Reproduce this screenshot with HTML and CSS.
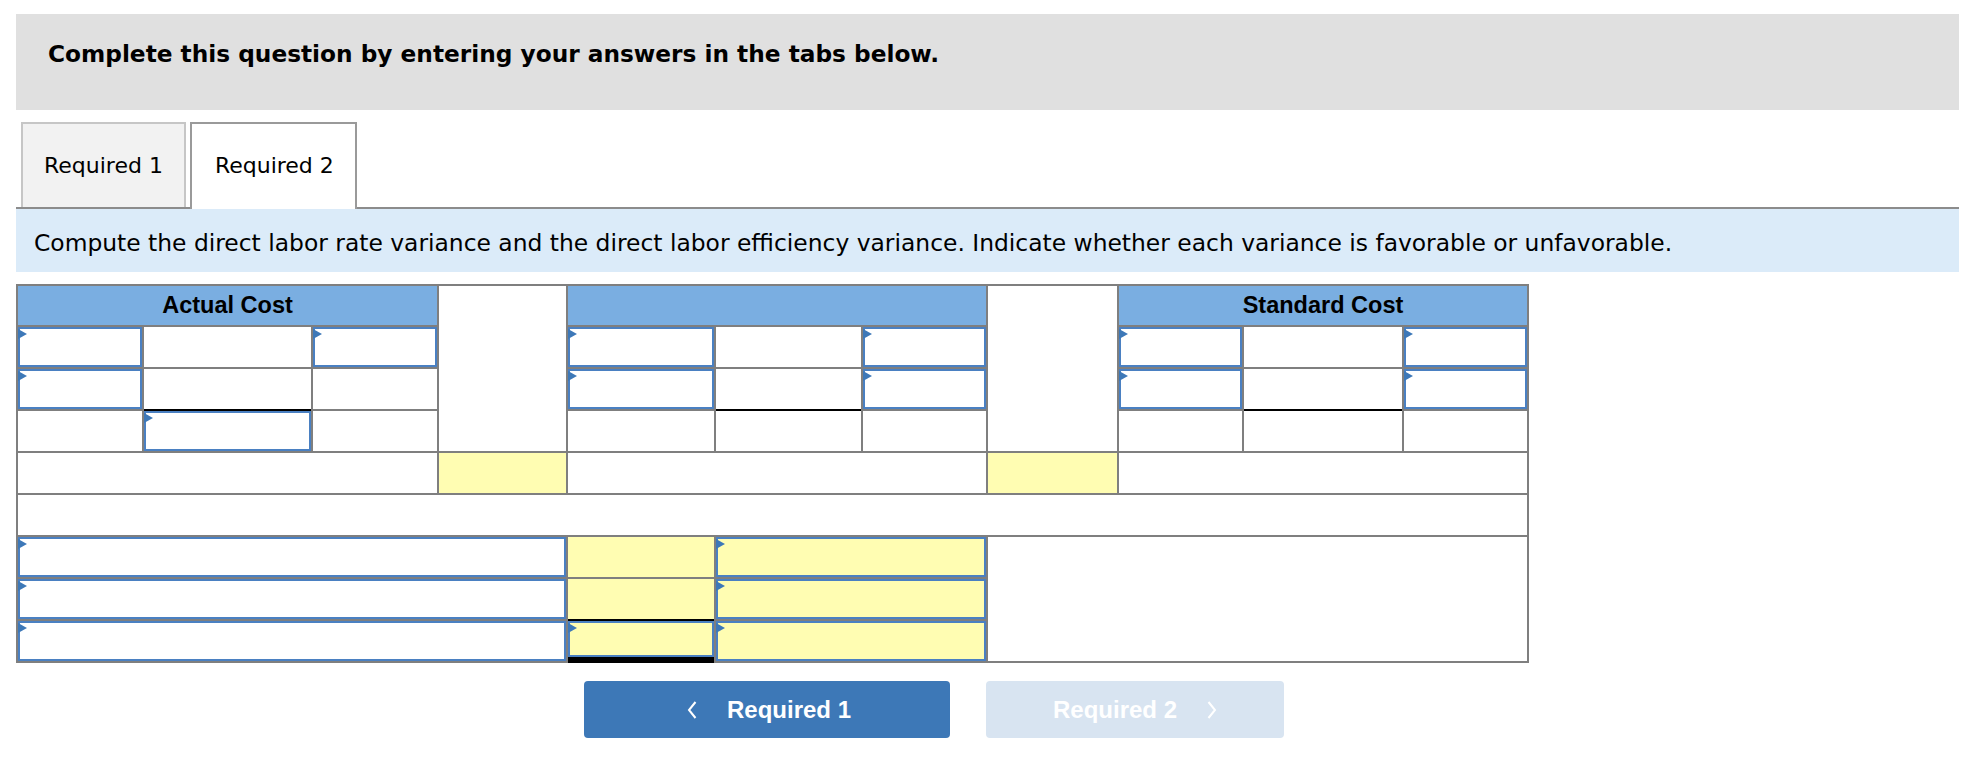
FILE: index.html
```html
<!DOCTYPE html>
<html lang="en">
<head>
<meta charset="utf-8">
<title>Required 2</title>
<link rel="stylesheet" href="styles.css">
</head>
<body>
<div class="page">
  <div class="banner">Complete this question by entering your answers in the tabs below.</div>

  <div class="tabs">
    <div class="tab">Required 1</div>
    <div class="tab active">Required 2</div>
  </div>

  <div class="instruction">Compute the direct labor rate variance and the direct labor efficiency variance. Indicate whether each variance is favorable or unfavorable.</div>

  <div class="sheet">
    <!-- header row -->
    <div class="head span3">Actual Cost</div>
    <div class="cell gapcol"></div>
    <div class="head span3"></div>
    <div class="cell gapcol"></div>
    <div class="head span3">Standard Cost</div>

    <!-- row 1 -->
    <div class="cell"><div class="inp"></div></div>
    <div class="cell"></div>
    <div class="cell"><div class="inp"></div></div>
    <div class="cell c5"><div class="inp"></div></div>
    <div class="cell"></div>
    <div class="cell"><div class="inp"></div></div>
    <div class="cell c9"><div class="inp"></div></div>
    <div class="cell"></div>
    <div class="cell"><div class="inp"></div></div>

    <!-- row 2 -->
    <div class="cell"><div class="inp"></div></div>
    <div class="cell under"></div>
    <div class="cell"></div>
    <div class="cell c5"><div class="inp"></div></div>
    <div class="cell under"></div>
    <div class="cell"><div class="inp"></div></div>
    <div class="cell c9"><div class="inp"></div></div>
    <div class="cell under"></div>
    <div class="cell"><div class="inp"></div></div>

    <!-- row 3 -->
    <div class="cell"></div>
    <div class="cell"><div class="inp"></div></div>
    <div class="cell"></div>
    <div class="cell c5"></div>
    <div class="cell"></div>
    <div class="cell"></div>
    <div class="cell c9"></div>
    <div class="cell"></div>
    <div class="cell"></div>

    <!-- row 4 -->
    <div class="cell span3"></div>
    <div class="cell yellow"></div>
    <div class="cell span3"></div>
    <div class="cell yellow"></div>
    <div class="cell span3"></div>

    <!-- row 5 -->
    <div class="cell spanall"></div>

    <!-- row 6 -->
    <div class="cell span4"><div class="inp"></div></div>
    <div class="cell yellow"></div>
    <div class="cell yellow span2"><div class="inp"></div></div>
    <div class="cell blankright"></div>

    <!-- row 7 -->
    <div class="cell span4"><div class="inp"></div></div>
    <div class="cell yellow under"></div>
    <div class="cell yellow span2"><div class="inp"></div></div>

    <!-- row 8 -->
    <div class="cell span4"><div class="inp"></div></div>
    <div class="cell total"><div class="inp"></div></div>
    <div class="cell yellow span2"><div class="inp"></div></div>
  </div>

  <div class="nav">
    <button class="navbtn prev" type="button">
      <svg class="chev" width="10" height="20" viewBox="0 0 10 20"><polyline points="8.5,2 2,10 8.5,18" fill="none" stroke="#ffffff" stroke-width="2"/></svg>
      <span>Required 1</span>
    </button>
    <button class="navbtn next" type="button">
      <span>Required 2</span>
      <svg class="chev" width="10" height="20" viewBox="0 0 10 20"><polyline points="1.5,2 8,10 1.5,18" fill="none" stroke="#ffffff" stroke-width="2"/></svg>
    </button>
  </div>
</div>
</body>
</html>
```

FILE: styles.css
```css
html, body {
  margin: 0;
  padding: 0;
  background: #ffffff;
}

.page {
  padding: 14px 19px 0 16px;
  font-family: "DejaVu Sans", Verdana, sans-serif;
  color: #000;
}

.banner {
  background: #e0e0e0;
  height: 96px;
  box-sizing: border-box;
  padding: 26px 32px 0 32px;
  font-weight: bold;
  font-size: 23.25px;
  line-height: 28px;
}

.tabs {
  margin-top: 12px;
  display: flex;
  gap: 4px;
  padding-left: 5px;
  border-bottom: 2px solid #8c8c8c;
  height: 85px;
}

.tab {
  box-sizing: border-box;
  height: 85px;
  display: flex;
  align-items: center;
  padding: 0 21px 0 21px;
  font-size: 22px;
  background: #f2f2f2;
  border: 2px solid #c6c6c6;
  border-bottom: none;
}

.tab.active {
  background: #ffffff;
  border-color: #9a9a9a;
  height: 87px;
  margin-bottom: -2px;
  padding: 0 21px 2px 23px;
}

.instruction {
  background: #dbebf9;
  height: 63px;
  box-sizing: border-box;
  padding: 20px 18px 0 18px;
  font-size: 23.4px;
  line-height: 28px;
}

.sheet {
  margin-top: 12px;
  display: grid;
  grid-template-columns: 124px 167px 124px 127px 146px 145px 123px 129px 123px 158px 123px;
  grid-template-rows: 39px repeat(8, 40px);
  gap: 2px;
  padding: 2px;
  background: #7f7f7f;
  width: max-content;
}

.cell {
  background: #ffffff;
  position: relative;
}

.head {
  background: #7aaee1;
  font-family: "Liberation Sans", Arial, sans-serif;
  font-weight: bold;
  font-size: 23.5px;
  display: flex;
  align-items: center;
  justify-content: center;
}

.span2 { grid-column: span 2; }
.span3 { grid-column: span 3; }
.span4 { grid-column: span 4; }
.spanall { grid-column: 1 / -1; }

.gapcol { grid-row: span 4; }

.c5 { grid-column: 5; }
.c9 { grid-column: 9; }

.blankright {
  grid-column: 8 / 12;
  grid-row: 7 / 10;
}

.yellow {
  background: #fffdb2;
}

.under {
  box-shadow: 0 2px 0 #000000;
  z-index: 1;
}

.total {
  background: #000000;
  box-shadow: 0 2px 0 #000000;
  z-index: 1;
}

.inp {
  position: relative;
  box-sizing: border-box;
  height: 100%;
  border: 2px solid #4a80c2;
}

.total .inp {
  height: calc(100% - 4px);
  background: #fffdb2;
}

.inp::before {
  content: "";
  position: absolute;
  left: -2px;
  top: 0;
  width: 0;
  height: 0;
  border-left: 9px solid #3d78b8;
  border-top: 5px solid transparent;
  border-bottom: 5px solid transparent;
}

.nav {
  margin-top: 18px;
  padding-left: 568px;
  display: flex;
  gap: 36px;
}

.navbtn {
  height: 57px;
  border: none;
  border-radius: 4px;
  display: flex;
  align-items: center;
  justify-content: center;
  gap: 30px;
  font-family: "Liberation Sans", Arial, sans-serif;
  font-weight: bold;
  font-size: 24px;
  color: #ffffff;
  padding: 0;
}

.navbtn.prev {
  width: 366px;
  background: #3d78b7;
  padding-left: 4px;
}

.navbtn.next {
  width: 298px;
  background: #d8e4f1;
}

.chev {
  display: block;
}
```
